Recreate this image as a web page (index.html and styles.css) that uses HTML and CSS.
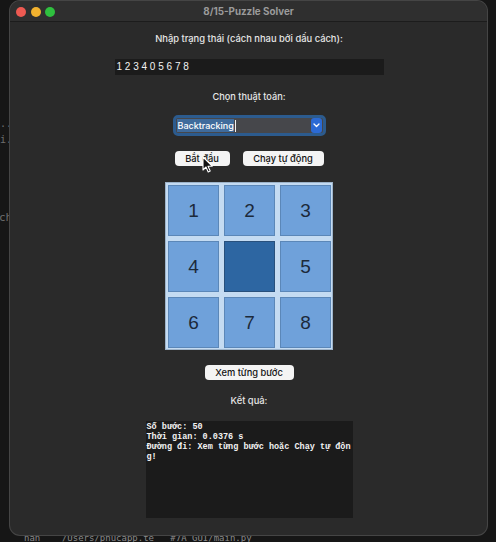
FILE: index.html
```html
<!DOCTYPE html>
<html>
<head>
<meta charset="utf-8">
<link rel="stylesheet" href="styles.css">
</head>
<body>
<div class="desktop">
  <div class="bg-text bg-left1">..</div>
  <div class="bg-text bg-left2">i..</div>
  <div class="bg-text bg-left3">ch</div>
  <div class="bg-text bg-bottom">nan &nbsp;&nbsp;&nbsp;/Users/phucapp.te &nbsp;&nbsp;#7A_GUI/main.py</div>

  <div class="window">
    <div class="titlebar">
      <div class="lights">
        <span class="light red"></span>
        <span class="light yellow"></span>
        <span class="light green"></span>
      </div>
      <div class="title">8/15-Puzzle Solver</div>
    </div>

    <div class="content">
      <div class="label label-state">Nhập trạng thái (cách nhau bởi dấu cách):</div>
      <div class="entry">1 2 3 4 0 5 6 7 8</div>

      <div class="label label-algo">Chọn thuật toán:</div>
      <div class="combo">
        <div class="combo-field"><span class="sel">Backtracking</span><span class="caret"></span></div>
        <div class="combo-btn">
          <svg width="7" height="5" viewBox="0 0 7 5"><path d="M1 1 L3.5 3.5 L6 1" fill="none" stroke="#fff" stroke-width="1.3" stroke-linecap="round" stroke-linejoin="round"/></svg>
        </div>
      </div>

      <div class="btn-row">
        <div class="btn btn-start">Bắt đầu</div>
        <div class="btn btn-auto">Chạy tự động</div>
      </div>

      <div class="board">
        <div class="tile">1</div>
        <div class="tile">2</div>
        <div class="tile">3</div>
        <div class="tile">4</div>
        <div class="tile empty"></div>
        <div class="tile">5</div>
        <div class="tile">6</div>
        <div class="tile">7</div>
        <div class="tile">8</div>
      </div>

      <div class="btn btn-step">Xem từng bước</div>

      <div class="label label-result">Kết quả:</div>
      <div class="output">Số bước: 50
Thời gian: 0.0376 s
Đường đi: Xem từng bước hoặc Chạy tự độn
g!</div>
    </div>

    <svg class="cursor" width="12" height="18" viewBox="0 0 12 18">
      <path d="M1 1 L1 14 L4 11 L6.2 16 L8.2 15.1 L6 10.2 L10.2 10.2 Z" fill="#111" stroke="#fff" stroke-width="1.1" stroke-linejoin="round"/>
    </svg>
  </div>
</div>
</body>
</html>
```

FILE: styles.css
```css
html, body {
  margin: 0;
  padding: 0;
  background: #161616;
}

.desktop {
  position: relative;
  width: 496px;
  height: 542px;
  overflow: hidden;
  background: #161616;
  padding-top: 1px;
  box-sizing: border-box;
}

.bg-text {
  position: absolute;
  font-family: "DejaVu Sans Mono", monospace;
  font-size: 10px;
  color: #6e6e6e;
  white-space: nowrap;
}
.bg-left1 { left: 0; top: 118px; }
.bg-left2 { left: 0; top: 134px; }
.bg-left3 { left: -1px; top: 211px; font-size: 11px; }
.bg-bottom { left: 24px; top: 533px; font-size: 9px; color: #8a8a8a; }

.window {
  position: relative;
  margin-left: 10px;
  width: 477px;
  height: 534px;
  border-radius: 10px;
  background: #2a2a2a;
  box-shadow: 0 0 0 1px #454545;
  overflow: hidden;
}

.titlebar {
  position: relative;
  height: 20px;
  background: #2f2f2f;
  border-bottom: 1px solid #1c1c1c;
  display: flex;
  align-items: center;
  justify-content: center;
}

.lights {
  position: absolute;
  left: 6px;
  top: 6px;
  display: flex;
  gap: 4.5px;
}
.light {
  width: 10px;
  height: 10px;
  border-radius: 50%;
  display: block;
}
.red { background: #ee5a52; }
.yellow { background: #f2b22f; }
.green { background: #2fc03f; }

.title {
  font-family: Inter, "Liberation Sans", sans-serif;
  font-weight: 700;
  font-size: 9.8px;
  color: #9b9b9b;
}

.content {
  display: flex;
  flex-direction: column;
  align-items: center;
  padding-left: 1px;
}

.label {
  font-family: Inter, "Liberation Sans", sans-serif;
  font-weight: 500;
  font-size: 9.4px;
  line-height: 16px;
  height: 16px;
  color: #e6e6e6;
}
.label-state { margin-top: 9px; }
.label-algo { margin-top: 14px; font-size: 9.2px; }
.label-result { margin-top: 13px; }

.entry {
  margin-top: 12px;
  width: 269px;
  height: 16px;
  background: #1b1b1b;
  box-sizing: border-box;
  padding-left: 2px;
  font-family: "Liberation Sans", Arial, sans-serif;
  font-size: 10px;
  line-height: 16px;
  color: #f2f2f2;
}

.combo {
  margin-top: 10px;
  width: 153px;
  height: 21px;
  box-sizing: border-box;
  border: 3px solid #2c5b8e;
  border-radius: 5px;
  background: #46474b;
  display: flex;
  align-items: center;
  padding: 0 1px 0 1px;
}
.combo-field {
  flex: 1;
  display: flex;
  align-items: center;
  height: 15px;
}
.sel {
  font-family: Inter, "Liberation Sans", sans-serif;
  font-weight: 500;
  font-size: 9px;
  line-height: 13px;
  color: #fff;
  background: #3f6b9c;
  padding: 0 0 0 1px;
}
.caret {
  width: 1px;
  height: 12px;
  background: #f0f0f0;
  margin-left: 1px;
}
.combo-btn {
  width: 11px;
  height: 15px;
  border-radius: 3px;
  background: #2b6ad4;
  display: flex;
  align-items: center;
  justify-content: center;
}

.btn-row {
  margin-top: 15px;
  display: flex;
  gap: 13px;
}

.btn {
  height: 15px;
  box-sizing: border-box;
  background: #f4f4f4;
  border-radius: 4px;
  font-family: Inter, "Liberation Sans", sans-serif;
  font-weight: 500;
  font-size: 9.3px;
  line-height: 15px;
  color: #111;
  text-align: center;
}
.btn-start { width: 55px; }
.btn-auto { width: 81px; }
.btn-step { width: 89px; margin-top: 15px; }

.board {
  margin-top: 16px;
  width: 168px;
  height: 168px;
  box-sizing: border-box;
  padding: 2px 1px 1px 2px;
  border: 1px solid #9db3c9;
  background: #c4dbf2;
  display: grid;
  grid-template-columns: repeat(3, 51px);
  grid-template-rows: repeat(3, 51px);
  gap: 5px;
}

.tile {
  box-sizing: border-box;
  background: #6fa1da;
  border: 1px solid #5b87b8;
  display: flex;
  align-items: center;
  justify-content: center;
  font-family: "Liberation Sans", Arial, sans-serif;
  font-size: 19px;
  color: #1c2a3a;
}
.tile.empty {
  background: #2d66a2;
  border-color: #28507c;
}

.output {
  margin-top: 12px;
  width: 207px;
  height: 97px;
  box-sizing: border-box;
  background: #1b1b1b;
  padding: 1px 0 0 1px;
  font-family: "Liberation Mono", monospace;
  font-weight: bold;
  font-size: 8.5px;
  line-height: 10px;
  color: #f2f2f2;
  white-space: pre;
}

.cursor {
  position: absolute;
  left: 192px;
  top: 155px;
}
```
